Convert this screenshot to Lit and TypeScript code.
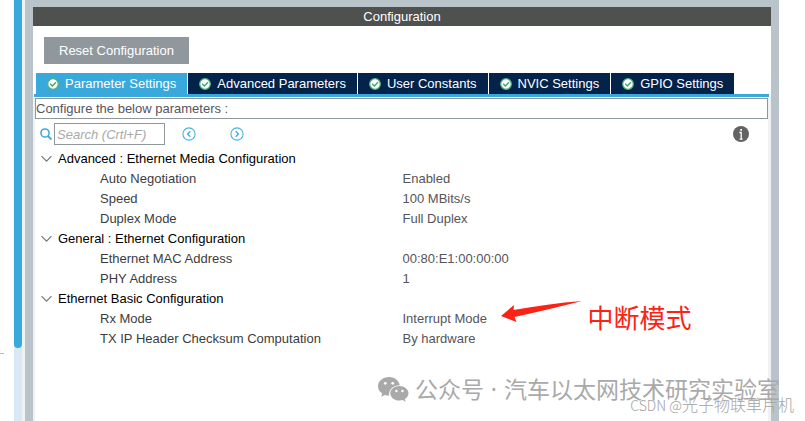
import { LitElement, html, css, svg } from "lit";
import { customElement, state } from "lit/decorators.js";
import { classMap } from "lit/directives/class-map.js";

interface Param {
  name: string;
  value: string;
  note?: string;
}

interface Group {
  title: string;
  params: Param[];
}

const TABS = [
  "Parameter Settings",
  "Advanced Parameters",
  "User Constants",
  "NVIC Settings",
  "GPIO Settings",
];

const GROUPS: Group[] = [
  {
    title: "Advanced : Ethernet Media Configuration",
    params: [
      { name: "Auto Negotiation", value: "Enabled" },
      { name: "Speed", value: "100 MBits/s" },
      { name: "Duplex Mode", value: "Full Duplex" },
    ],
  },
  {
    title: "General : Ethernet Configuration",
    params: [
      { name: "Ethernet MAC Address", value: "00:80:E1:00:00:00" },
      { name: "PHY Address", value: "1" },
    ],
  },
  {
    title: "Ethernet Basic Configuration",
    params: [
      { name: "Rx Mode", value: "Interrupt Mode", note: "中断模式" },
      { name: "TX IP Header Checksum Computation", value: "By hardware" },
    ],
  },
];

const checkIcon = html`<svg class="check" viewBox="0 0 12 12" width="12" height="12" aria-hidden="true">
  <circle cx="6" cy="6" r="5.3" fill="#fff" stroke="#52b27c" stroke-width="1.3" />
  <path d="M3.2 5.8 5.3 7.9 9 4.2" fill="none" stroke="#3fa76c" stroke-width="1.4" />
</svg>`;

const circled = (d: string) => html`<svg viewBox="0 0 14 14" width="14" height="14" aria-hidden="true">
  ${svg`<circle cx="7" cy="7" r="6.1" fill="none" stroke="#4db1df" stroke-width="1.1" />
  <path d=${d} fill="none" stroke="#3aa9dc" stroke-width="1.3" />`}
</svg>`;

@customElement("app-root")
export class AppRoot extends LitElement {
  @state() private active = 0;
  @state() private closed = new Set<number>();

  static styles = css`
    :host {
      display: block;
      position: relative;
      overflow: hidden;
      background: #fff;
      color: #55555a;
      font: 13px/20px "Liberation Sans", Arial, "Noto Sans CJK SC", sans-serif;
    }
    button {
      font: inherit;
      color: inherit;
      background: none;
      border: 0;
      padding: 0;
    }
    svg {
      display: block;
      flex: none;
    }
    .frame {
      display: flex;
      min-height: 100vh;
    }
    .gutter {
      flex: none;
      position: relative;
      width: 14px;
    }
    .tick {
      position: absolute;
      left: 0;
      top: 353px;
      width: 4px;
      height: 1px;
      background: #b8b8b8;
    }
    .scroll {
      flex: none;
      width: 8px;
      background: #d8e8f5;
      border-right: 3px solid #f0f1f2;
    }
    .thumb {
      height: 348px;
      background: #39a9dc;
      border-radius: 0 0 4px 4px;
    }
    .panel {
      flex: 1;
      min-width: 0;
      display: flex;
      flex-direction: column;
      margin-right: 26px;
      border: solid #b8c4ca;
      border-width: 7px 8px 0;
    }
    .title {
      margin: 0;
      background: #4f514f;
      color: #fff;
      font-size: 13px;
      font-weight: normal;
      line-height: 19px;
      text-align: center;
    }
    .reset {
      align-self: flex-start;
      margin: 11px 11px 9px;
      padding: 0 15px;
      height: 27px;
      background: #90989e;
      color: #fff;
    }
    .tabs {
      display: flex;
      gap: 1px;
      margin: 0 2px 0 1px;
      padding-left: 2px;
      border-bottom: 3px solid #39a9dc;
    }
    .tab {
      display: flex;
      align-items: center;
      gap: 6px;
      height: 21px;
      padding: 0 11px;
      background: #03234b;
      color: #fff;
      white-space: nowrap;
    }
    .tab.on {
      background: #39a9dc;
    }
    .body {
      flex: 1;
      padding-top: 1px;
      border: solid #f0f1f2;
      border-width: 0 3px 0 2px;
    }
    .hint {
      margin: 0;
      height: 19px;
      line-height: 19px;
      border: 1px solid #8f979d;
    }
    .tools {
      display: flex;
      align-items: center;
      height: 22px;
      padding: 4px 19px 4px 5px;
    }
    .search {
      display: flex;
      align-items: center;
      gap: 2px;
    }
    .search input {
      box-sizing: border-box;
      width: 111px;
      height: 22px;
      padding: 0 2px;
      border: 1px solid #8f979d;
      border-radius: 0;
      font: italic 13px/20px "Liberation Sans", Arial, sans-serif;
      color: #55555a;
    }
    .search input::placeholder {
      color: #a9a9a9;
      opacity: 1;
    }
    .prev {
      margin: 0 34px 0 17px;
    }
    .info {
      margin-left: auto;
    }
    table {
      width: 100%;
      table-layout: fixed;
      border-collapse: collapse;
    }
    th,
    td {
      height: 20px;
      padding: 0;
      text-align: left;
      font-weight: normal;
      white-space: nowrap;
    }
    .name {
      padding-left: 65px;
      color: #3c3c40;
    }
    .value {
      position: relative;
      padding-left: 1px;
    }
    .toggle {
      display: flex;
      align-items: center;
      gap: 6px;
      padding-left: 6px;
      color: #000;
    }
    .closed svg {
      transform: rotate(-90deg);
    }
    .note {
      position: absolute;
      left: 99px;
      top: -10px;
      display: flex;
      gap: 5px;
      color: #fb2315;
      font: 26px/36px "Noto Sans CJK SC", sans-serif;
    }
    .mark {
      position: absolute;
      right: 25px;
      bottom: 16px;
      display: flex;
      align-items: center;
      gap: 6px;
      color: #a9a9a9;
      font: 23px/32px "Noto Sans", "Noto Sans CJK SC", sans-serif;
      white-space: pre;
    }
    .dot {
      margin: 0 1px;
    }
    .credit {
      position: absolute;
      right: 11px;
      bottom: 4px;
      color: #a4a4a4;
      font: 300 16px/24px "Noto Sans CJK SC", sans-serif;
      white-space: pre;
    }
    .site {
      font-size: 14px;
    }
  `;

  private toggle(i: number) {
    const next = new Set(this.closed);
    if (!next.delete(i)) next.add(i);
    this.closed = next;
  }

  private renderGroup(g: Group, i: number) {
    const closed = this.closed.has(i);
    return html`<tbody>
      <tr>
        <th colspan="2" scope="rowgroup">
          <button
            class=${classMap({ toggle: true, closed })}
            aria-expanded=${closed ? "false" : "true"}
            @click=${() => this.toggle(i)}
          >
            <svg viewBox="0 0 11 8" width="11" height="8" aria-hidden="true">
              <path d="M.5 1.2 5.5 6.2 10.5 1.2" fill="none" stroke="#777" stroke-width="1.2" />
            </svg>
            ${g.title}
          </button>
        </th>
      </tr>
      ${closed
        ? ""
        : g.params.map(
            (p) => html`<tr>
              <th class="name" scope="row">${p.name}</th>
              <td class="value">
                ${p.value}
                ${p.note
                  ? html`<span class="note">
                      <svg viewBox="0 0 82 24" width="82" height="24" aria-hidden="true">
                        <path
                          d="M0 17 13 6 12.5 11C35 7.5 58 3.5 81 2C60 7 38 13 13.5 18L15.5 23Z"
                          fill="#fb2315"
                        />
                      </svg>
                      ${p.note}
                    </span>`
                  : ""}
              </td>
            </tr>`
          )}
    </tbody>`;
  }

  render() {
    return html`
      <div class="frame">
        <div class="gutter"><div class="tick"></div></div>
        <div class="scroll"><div class="thumb"></div></div>
        <main class="panel">
          <h1 class="title">Configuration</h1>
          <button class="reset">Reset Configuration</button>
          <div class="tabs" role="tablist">
            ${TABS.map(
              (t, i) => html`<button
                role="tab"
                aria-selected=${i === this.active ? "true" : "false"}
                class=${classMap({ tab: true, on: i === this.active })}
                @click=${() => (this.active = i)}
              >
                ${checkIcon}${t}
              </button>`
            )}
          </div>
          <div class="body">
            <p class="hint">Configure the below parameters :</p>
            <div class="tools">
              <label class="search">
                <svg viewBox="0 0 12 12" width="12" height="12" aria-hidden="true">
                  <circle cx="5" cy="5" r="4.1" fill="none" stroke="#39a9dc" stroke-width="1.5" />
                  <path d="M8 8 11.5 11.5" stroke="#39a9dc" stroke-width="1.9" />
                </svg>
                <input type="text" placeholder="Search (Crtl+F)" aria-label="Search" />
              </label>
              <button class="prev" aria-label="Previous">${circled("M8.3 4.3 5.6 7 8.3 9.7")}</button>
              <button class="next" aria-label="Next">${circled("M5.7 4.3 8.4 7 5.7 9.7")}</button>
              <button class="info" aria-label="Information">
                <svg viewBox="0 0 16 16" width="16" height="16" aria-hidden="true">
                  <circle cx="8" cy="8" r="8" fill="#636363" />
                  <path d="M6.4 6.5H8.2V13M6.6 13.2H9.6" fill="none" stroke="#fff" stroke-width="1.3" />
                  <path d="M7.2 3H9V4.8H7.2Z" fill="#fff" />
                </svg>
              </button>
            </div>
            <table>
              ${GROUPS.map((g, i) => this.renderGroup(g, i))}
            </table>
          </div>
        </main>
      </div>
      <div class="mark">
        <svg viewBox="0 0 31 25" width="31" height="25" aria-hidden="true">
          <path
            d="M11 0C5 0 0 4 0 9.2C0 12.2 1.6 14.8 4.2 16.5L3.2 19.7 6.9 17.9C8.2 18.3 9.8 18.5 11.2 18.4C10.3 12.5 15.5 8 21.8 8.2C20.8 3.3 16.3 0 11 0Z"
            fill="#a9a9a9"
          />
          <path
            d="M21.3 9C16.2 9 12.3 12.3 12.3 16.3C12.3 20.4 16.2 23.6 21.3 23.6C22.4 23.6 23.6 23.4 24.6 23.1L27.5 24.7 26.8 22.1C29 20.7 30.5 18.6 30.5 16.3C30.5 12.3 26.4 9 21.3 9Z"
            fill="#a9a9a9"
          />
          <g fill="#fff">
            <circle cx="7.3" cy="6.3" r="1.4" />
            <circle cx="14.7" cy="6.3" r="1.4" />
            <circle cx="18.4" cy="14" r="1.2" />
            <circle cx="24.4" cy="14" r="1.2" />
          </g>
        </svg>
        <span>公众号<span class="dot"> · </span>汽车以太网技术研究实验室</span>
      </div>
      <div class="credit"><span class="site">CSDN @</span>光子物联单片机</div>
    `;
  }
}
